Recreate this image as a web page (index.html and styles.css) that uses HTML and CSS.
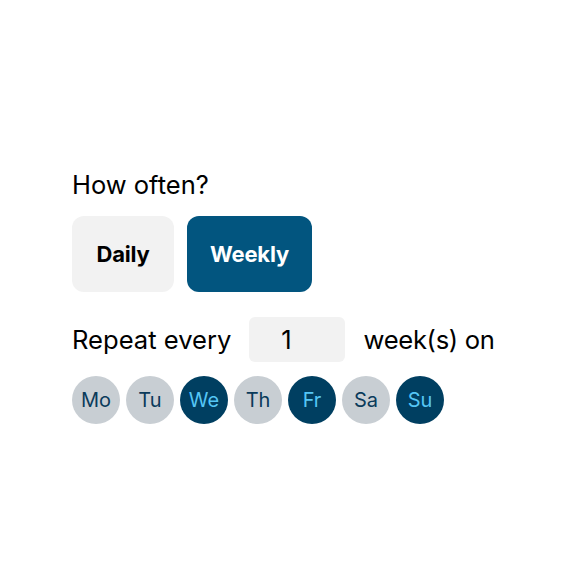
FILE: index.html
```html
<!DOCTYPE html>
<html>
<head>
<meta charset="utf-8">
<link rel="stylesheet" href="styles.css">
</head>
<body>
<div class="wrap">
  <div class="title">How often?</div>
  <div class="modes">
    <button class="mode">Daily</button>
    <button class="mode active">Weekly</button>
  </div>
  <div class="repeat">
    <span>Repeat every</span>
    <div class="num">1</div>
    <span>week(s) on</span>
  </div>
  <div class="days">
    <div class="day">Mo</div>
    <div class="day">Tu</div>
    <div class="day on">We</div>
    <div class="day">Th</div>
    <div class="day on">Fr</div>
    <div class="day">Sa</div>
    <div class="day on">Su</div>
  </div>
</div>
</body>
</html>
```
FILE: styles.css
```css
html, body { margin: 0; padding: 0; background: #fff; }
body { font-family: "Inter", "Lato", sans-serif; color: #000; }
.wrap { padding: 169px 0 0 72px; }
.title { font-size: 25.5px; line-height: 32px; margin-bottom: 15px; }
.modes { display: flex; gap: 13px; }
.mode {
  height: 76px; border: none; border-radius: 12px; background: #f2f2f2;
  font-family: inherit; font-size: 22px; font-weight: 700; color: #000;
  padding: 0; width: 102px; letter-spacing: -0.2px;
}
.mode.active { background: #02557f; color: #fff; width: 125px; }
.repeat { display: flex; align-items: center; margin-top: 25px; font-size: 25.6px; height: 45px; }
.repeat span:last-child { letter-spacing: -0.3px; }
.num {
  box-sizing: border-box; width: 96px; height: 45px; background: #f2f2f2; border-radius: 6px;
  display: flex; align-items: center; justify-content: center; padding-right: 22px;
  margin: 0 18px 0 18px;
}
.days { display: flex; gap: 6px; margin-top: 14px; }
.day {
  width: 48px; height: 48px; border-radius: 50%; background: #c8ced3; color: #0b3b5b;
  display: flex; align-items: center; justify-content: center; font-size: 20px;
}
.day.on { background: #003f61; color: #55c6f5; }
```
